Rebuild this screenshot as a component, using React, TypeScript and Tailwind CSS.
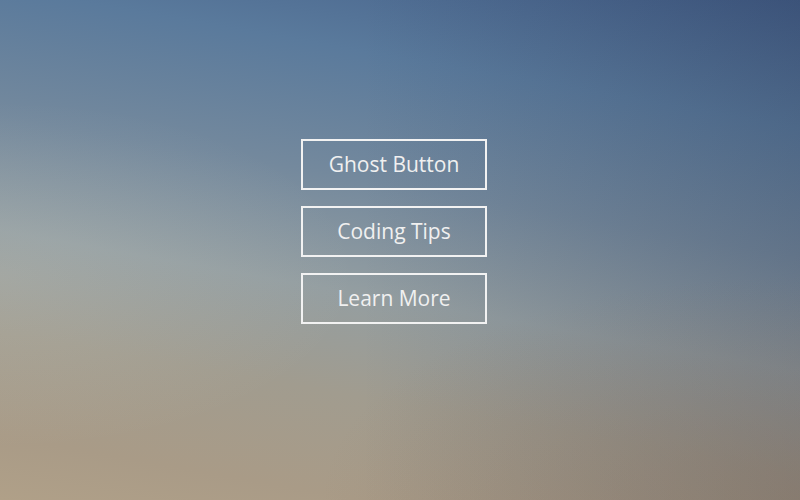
export default function App() {
  const labels = ["Ghost Button", "Coding Tips", "Learn More"];

  return (
    <div className="w-[800px] h-[500px] overflow-hidden bg-[radial-gradient(ellipse_60%_45%_at_100%_100%,rgba(135,110,90,0.35),transparent),radial-gradient(ellipse_45%_35%_at_0%_55%,rgba(225,230,220,0.14),transparent),linear-gradient(to_right,transparent_0%,transparent_45%,rgba(25,30,55,0.2)_100%),linear-gradient(190deg,#44608a_0%,#5a7a9c_20%,#74899d_40%,#949ea1_58%,#a19c8f_74%,#a99b87_90%,#b0a088_100%)]">
      <div className="flex flex-col items-start gap-[16px] pl-[301px] pt-[139px] font-['Open_Sans',sans-serif]">
        {labels.map((label) => (
          <button
            key={label}
            className="w-[186px] h-[51px] border-2 border-[#f2f2f2] bg-transparent pt-px text-[21px] text-[#f0f0f0] flex items-center justify-center"
          >
            {label}
          </button>
        ))}
      </div>
    </div>
  );
}
